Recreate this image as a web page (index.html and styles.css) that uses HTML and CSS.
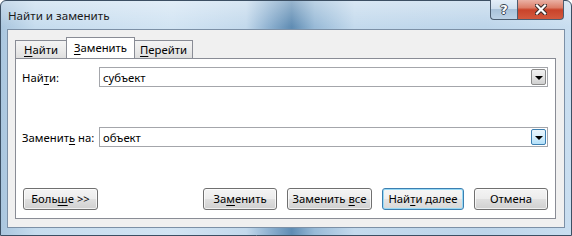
FILE: index.html
```html
<!DOCTYPE html>
<html lang="ru">
	<head>
		<meta charset="UTF-8" />
		<title>Найти и заменить</title>
		<link rel="stylesheet" href="styles.css">
	</head>
	<body>
		<div class="window">
			<div class="titlebar">
				<span class="title">Найти и заменить</span>
				<div class="caption-btns">
					<span class="cap-btn help">?</span>
					<span class="cap-btn close">
						<svg width="12" height="11" viewBox="0 0 12 11">
							<path d="M2 1.5 L10 9.5 M10 1.5 L2 9.5" stroke="#3b2a28" stroke-width="4.2" stroke-linecap="square" fill="none" />
							<path d="M2 1.5 L10 9.5 M10 1.5 L2 9.5" stroke="#ffffff" stroke-width="2.2" stroke-linecap="square" fill="none" />
						</svg>
					</span>
				</div>
			</div>

			<div class="client">
				<div class="tabs">
					<div class="tab tab-find"><u>Н</u>айти</div>
					<div class="tab tab-replace active"><u>З</u>аменить</div>
					<div class="tab tab-goto"><u>П</u>ерейти</div>
				</div>

				<div class="panel">
					<div class="field">
						<label class="field-label">Най<u>т</u>и:</label>
						<div class="combo">
							<span class="combo-text">субъект</span>
							<span class="combo-btn"><span class="arrow"></span></span>
						</div>
					</div>

					<div class="field field-replace">
						<label class="field-label">Заменит<u>ь</u> на:</label>
						<div class="combo">
							<span class="combo-text">объект</span>
							<span class="combo-btn hot"><span class="arrow"></span></span>
						</div>
					</div>

					<div class="buttons">
						<button class="btn btn-more">Боль<u>ш</u>е &gt;&gt;</button>
						<div class="spacer"></div>
						<button class="btn btn-replace">За<u>м</u>енить</button>
						<button class="btn btn-replace-all">Заменить <u>в</u>се</button>
						<button class="btn btn-next default">Най<u>т</u>и далее</button>
						<button class="btn btn-cancel">Отмена</button>
					</div>
				</div>
			</div>
		</div>
	</body>
</html>
```

FILE: styles.css
```css
* {
	box-sizing: border-box;
}

body {
	margin: 0;
	padding: 0;
	width: 572px;
	height: 236px;
	overflow: hidden;
	font-family: "Noto Sans", "Open Sans", sans-serif;
	font-size: 11.3px;
	color: #000;
	background: #fff;
}

u {
	text-decoration: underline;
	text-underline-offset: 2px;
}

.window {
	width: 572px;
	height: 236px;
	display: flex;
	flex-direction: column;
	padding: 0 6px 7px 6px;
	border: 1px solid #3c4f63;
	border-radius: 6px 6px 0 0;
	background:
		linear-gradient(180deg, rgba(255, 255, 255, 0.35) 0px, rgba(255, 255, 255, 0) 26px),
		linear-gradient(90deg, #aac6de 0%, #c6dcee 6%, #d2e4f3 30%, #c3d9ec 43%, #8fb2d1 47%, #5f8cb3 51%, #98bad7 55%, #c4daed 62%, #bdd5ea 85%, #c9def0 100%);
}

.titlebar {
	height: 28px;
	display: flex;
	align-items: flex-start;
	justify-content: space-between;
}

.title {
	margin-top: 7px;
	margin-left: 1px;
	font-size: 11.6px;
	color: #1b1b1b;
}

.caption-btns {
	display: flex;
	margin-right: 1px;
	margin-top: -1px;
}

.cap-btn {
	height: 20px;
	display: flex;
	align-items: center;
	justify-content: center;
	border: 1px solid #4c5d70;
	border-top: none;
}

.help {
	width: 27px;
	border-right: none;
	border-radius: 0 0 0 4px;
	background: linear-gradient(180deg, #e4eef8 0%, #cfdfee 45%, #a9c2d9 50%, #bcd2e6 100%);
	color: #fff;
	font-family: "DejaVu Sans", sans-serif;
	font-weight: bold;
	font-size: 13px;
	text-shadow: 1px 0 0 #3a4654, -1px 0 0 #3a4654, 0 1px 0 #3a4654, 0 -1px 0 #3a4654;
}

.close {
	width: 47px;
	border-radius: 0 0 4px 0;
	background: linear-gradient(180deg, #eab1a5 0%, #dc7e69 40%, #c9432a 52%, #d35a3e 100%);
}

.client {
	flex: 1;
	display: flex;
	flex-direction: column;
	padding: 7px 8px 8px 7px;
	background: #f0f0f0;
	border: 1px solid #7c90a6;
}

.tabs {
	display: flex;
	align-items: flex-end;
	height: 21px;
}

.tab {
	height: 18px;
	display: flex;
	align-items: center;
	justify-content: center;
	border: 1px solid #898c95;
	border-bottom: none;
	background: linear-gradient(180deg, #f3f3f3 0%, #ebebeb 50%, #dedede 100%);
}

.tab-find {
	width: 51px;
	border-right: none;
}

.tab-replace {
	width: 69px;
}

.tab-goto {
	width: 58px;
	border-left: none;
}

.tab.active {
	height: 22px;
	margin-bottom: -1px;
	background: #fff;
	padding-bottom: 2px;
}

.panel {
	flex: 1;
	display: flex;
	flex-direction: column;
	padding: 8px 7px 8px 6px;
	background: #fff;
	border: 1px solid #898c95;
}

.field {
	display: flex;
	align-items: center;
	height: 20px;
}

.field-replace {
	margin-top: 40px;
}

.field-label {
	width: 77px;
}

.combo {
	flex: 1;
	height: 20px;
	display: flex;
	align-items: center;
	justify-content: space-between;
	border: 1px solid #a4a6ab;
	padding: 1px;
	padding-left: 3px;
}

.combo-btn {
	width: 15px;
	height: 16px;
	display: flex;
	align-items: center;
	justify-content: center;
	border: 1px solid #8a8a8a;
	border-radius: 2px;
	background: linear-gradient(180deg, #f2f2f2 0%, #e4e4e4 50%, #d0d0d0 100%);
}

.combo-btn.hot {
	border-color: #3c7fb1;
	background: linear-gradient(180deg, #eaf6fd 0%, #d5eefc 50%, #b3e0f9 100%);
}

.arrow {
	width: 0;
	height: 0;
	margin-top: 1px;
	border-left: 4px solid transparent;
	border-right: 4px solid transparent;
	border-top: 4px solid #000;
}

.buttons {
	margin-top: auto;
	display: flex;
	gap: 10px;
}

.spacer {
	flex: 1;
}

.btn {
	height: 22px;
	padding: 0 0 1px 0;
	font-family: "Noto Sans", "Open Sans", sans-serif;
	font-size: 11.3px;
	color: #000;
	border: 1px solid #707070;
	border-radius: 3px;
	background: linear-gradient(180deg, #f4f4f4 0%, #ececec 50%, #dfdfdf 52%, #d0d0d0 100%);
	box-shadow: inset 0 0 0 1px rgba(255, 255, 255, 0.7);
}

.btn-more {
	width: 75px;
	margin-left: 1px;
}

.btn-replace {
	width: 74px;
}

.btn-replace-all {
	width: 85px;
}

.btn-next {
	width: 82px;
}

.btn-cancel {
	width: 74px;
}

.btn.default {
	border-color: #3c7fb1;
	background: linear-gradient(180deg, #f6f6f6 0%, #efefef 50%, #e3e3e3 52%, #d8d8d8 100%);
	box-shadow: inset 0 0 0 1px #97d9f5;
}
```
